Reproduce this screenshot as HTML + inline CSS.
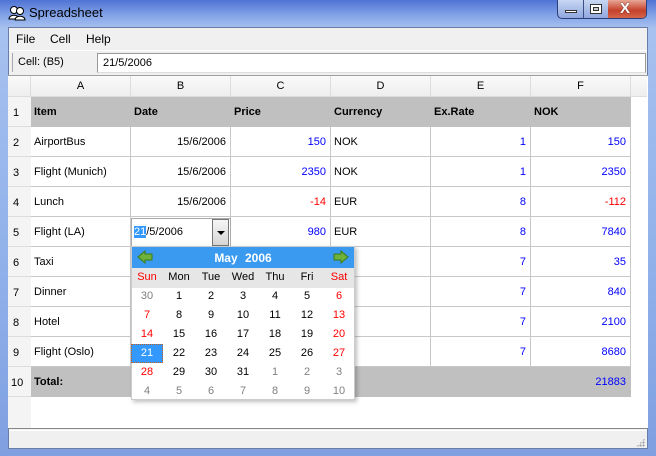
<!DOCTYPE html>
<html><head><meta charset="utf-8"><style>
*{margin:0;padding:0;box-sizing:border-box}
body{width:656px;height:456px;overflow:hidden;font-family:"Liberation Sans",sans-serif;font-size:11px;color:#000;position:relative;background:#6d8fd6}
.a{position:absolute}
.frame{left:0;top:0;width:656px;height:456px;background:linear-gradient(180deg,#4f73d4 0,#7fa0e6 14px,#a7c1ef 28px,#8fb0ea 60%,#7f9fe0 100%)}
.c{position:absolute;height:30px;line-height:30px;border-right:1px solid #c8c8c8;border-bottom:1px solid #c8c8c8;background:#fff;padding:0 3px;white-space:nowrap;overflow:hidden}
.r{text-align:right;padding-right:4px;color:#0000ff}
.red{color:#ff0000}
.h{background:#c0c0c0;font-weight:bold;border-color:#c0c0c0}
.ch{position:absolute;top:76px;height:21px;line-height:21px;text-align:center;background:linear-gradient(#fafafa,#eeeeee);border-right:1px solid #ddd;border-bottom:1px solid #ddd}
.rh{position:absolute;left:8px;width:23px;height:30px;line-height:32px;padding-left:5px;background:#f4f4f4;border-bottom:1px solid #ddd}
.cal div{position:absolute;width:32px;text-align:center}
</style></head><body>
<div class="a frame"></div>
<!-- title -->
<div class="a" style="left:8px;top:4px;width:18px;height:18px">
<svg width="18" height="18"><circle cx="6" cy="6" r="3.5" fill="#fff" stroke="#000"/><path d="M1 15c0-5 10-5 10 0z" fill="#fff" stroke="#000"/><circle cx="12" cy="7" r="3.5" fill="#fff" stroke="#000"/><path d="M7 16c0-5 10-5 10 0z" fill="#fff" stroke="#000"/></svg></div>
<div class="a" style="left:29px;top:5px;font-size:13px;color:#000">Spreadsheet</div>
<div class="a" style="left:557px;top:0;width:90px;height:19px;border:1px solid #2c3f78;border-top:none;border-radius:0 0 5px 5px;background:linear-gradient(#c8d6f2,#8ea7de);overflow:hidden">
<div class="a" style="left:25px;top:0;width:1px;height:19px;background:#3b4f86"></div>
<div class="a" style="left:50px;top:0;width:39px;height:19px;background:linear-gradient(#e8a796,#c5412a 55%,#d86a4f)"></div>
<div class="a" style="left:7px;top:10px;width:12px;height:3px;background:#fff;border:1px solid #333"></div>
<div class="a" style="left:32px;top:4px;width:12px;height:10px;border:1px solid #333;background:#fff"><div class="a" style="left:2px;top:2px;width:6px;height:4px;border:1px solid #333;background:#ccc"></div></div>
<div class="a" style="left:62px;top:0px;font-weight:bold;font-size:15px;color:#fff;text-shadow:0 0 1px #000">X</div>
</div>
<!-- client -->
<div class="a" style="left:8px;top:27px;width:640px;height:422px;background:#f0f0f0;border:1px solid #6a7ca8"></div>
<div class="a" style="left:16px;top:32px;font-size:12px">File</div>
<div class="a" style="left:50px;top:32px;font-size:12px">Cell</div>
<div class="a" style="left:86px;top:32px;font-size:12px">Help</div>
<div class="a" style="left:9px;top:50px;width:638px;height:1px;background:#fff"></div>
<div class="a" style="left:12px;top:53px;width:1px;height:19px;background:#aaa"></div>
<div class="a" style="left:18px;top:56px;font-size:11px">Cell: (B5)</div>
<div class="a" style="left:97px;top:53px;width:549px;height:20px;background:#fff;border:1px solid #999;border-bottom-color:#ddd;padding:3px 0 0 5px;font-size:11px">21/5/2006</div>
<!-- grid -->
<div class="a" style="left:8px;top:75px;width:640px;height:354px;background:#fff;border-top:1px solid #a0a0a0;border-bottom:1px solid #888"></div>
<div class="a" style="left:8px;top:76px;width:23px;height:352px;background:#f4f4f4"></div>
<div class="ch" style="left:8px;width:23px"></div>
<div class="ch" style="left:31px;width:100px">A</div>
<div class="ch" style="left:131px;width:100px">B</div>
<div class="ch" style="left:231px;width:100px">C</div>
<div class="ch" style="left:331px;width:100px">D</div>
<div class="ch" style="left:431px;width:100px">E</div>
<div class="ch" style="left:531px;width:100px">F</div>
<div class="ch" style="left:631px;width:16px;border-right:none"></div>
<div class="rh" style="top:97px">1</div><div class="rh" style="top:127px">2</div><div class="rh" style="top:157px">3</div><div class="rh" style="top:187px">4</div><div class="rh" style="top:217px">5</div><div class="rh" style="top:247px">6</div><div class="rh" style="top:277px">7</div><div class="rh" style="top:307px">8</div><div class="rh" style="top:337px">9</div><div class="rh" style="top:367px;padding-left:3px">10</div>

<div class="c h" style="left:31px;top:97px;width:100px">Item</div><div class="c h" style="left:131px;top:97px;width:100px">Date</div><div class="c h" style="left:231px;top:97px;width:100px">Price</div><div class="c h" style="left:331px;top:97px;width:100px">Currency</div><div class="c h" style="left:431px;top:97px;width:100px">Ex.Rate</div><div class="c h" style="left:531px;top:97px;width:100px">NOK</div>

<div class="c" style="left:31px;top:127px;width:100px">AirportBus</div><div class="c" style="left:131px;top:127px;width:100px;text-align:right;padding-right:4px">15/6/2006</div><div class="c r" style="left:231px;top:127px;width:100px">150</div><div class="c" style="left:331px;top:127px;width:100px">NOK</div><div class="c r" style="left:431px;top:127px;width:100px">1</div><div class="c r" style="left:531px;top:127px;width:100px">150</div>

<div class="c" style="left:31px;top:157px;width:100px">Flight (Munich)</div><div class="c" style="left:131px;top:157px;width:100px;text-align:right;padding-right:4px">15/6/2006</div><div class="c r" style="left:231px;top:157px;width:100px">2350</div><div class="c" style="left:331px;top:157px;width:100px">NOK</div><div class="c r" style="left:431px;top:157px;width:100px">1</div><div class="c r" style="left:531px;top:157px;width:100px">2350</div>

<div class="c" style="left:31px;top:187px;width:100px">Lunch</div><div class="c" style="left:131px;top:187px;width:100px;text-align:right;padding-right:4px">15/6/2006</div><div class="c r red" style="left:231px;top:187px;width:100px">-14</div><div class="c" style="left:331px;top:187px;width:100px">EUR</div><div class="c r" style="left:431px;top:187px;width:100px">8</div><div class="c r red" style="left:531px;top:187px;width:100px">-112</div>

<div class="c" style="left:31px;top:217px;width:100px">Flight (LA)</div><div class="c" style="left:131px;top:217px;width:100px"></div><div class="c r" style="left:231px;top:217px;width:100px">980</div><div class="c" style="left:331px;top:217px;width:100px">EUR</div><div class="c r" style="left:431px;top:217px;width:100px">8</div><div class="c r" style="left:531px;top:217px;width:100px">7840</div>

<div class="c" style="left:31px;top:247px;width:100px">Taxi</div><div class="c" style="left:331px;top:247px;width:100px"></div><div class="c r" style="left:431px;top:247px;width:100px">7</div><div class="c r" style="left:531px;top:247px;width:100px">35</div>
<div class="c" style="left:31px;top:277px;width:100px">Dinner</div><div class="c" style="left:331px;top:277px;width:100px"></div><div class="c r" style="left:431px;top:277px;width:100px">7</div><div class="c r" style="left:531px;top:277px;width:100px">840</div>
<div class="c" style="left:31px;top:307px;width:100px">Hotel</div><div class="c" style="left:331px;top:307px;width:100px"></div><div class="c r" style="left:431px;top:307px;width:100px">7</div><div class="c r" style="left:531px;top:307px;width:100px">2100</div>
<div class="c" style="left:31px;top:337px;width:100px">Flight (Oslo)</div><div class="c" style="left:331px;top:337px;width:100px"></div><div class="c r" style="left:431px;top:337px;width:100px">7</div><div class="c r" style="left:531px;top:337px;width:100px">8680</div>
<div class="c h" style="left:31px;top:367px;width:600px">Total:</div>
<div class="c r" style="left:531px;top:367px;width:100px;background:#c0c0c0;border-color:#c0c0c0">21883</div>

<!-- editor -->
<div class="a" style="left:131px;top:218px;width:100px;height:29px;background:#fff;border:1px solid #aaa"></div>
<div class="a" style="left:134px;top:226px;font-size:11px"><span style="background:#3399ff;color:#fff">21</span>/5/2006</div>
<div class="a" style="left:212px;top:219px;width:17px;height:27px;border:1px solid #777;background:linear-gradient(#f6f6f6,#d6d6d6)"><div class="a" style="left:4px;top:11px;width:0;height:0;border-left:4px solid transparent;border-right:4px solid transparent;border-top:4px solid #000"></div></div>

<!-- calendar -->
<div class="a" style="left:133px;top:248px;width:224px;height:154px;background:rgba(0,0,0,.25);filter:blur(2px)"></div>
<div class="a cal" style="left:131px;top:246px;width:224px;height:154px;background:#fff;border:1px solid #ccc">
<div style="left:0;top:0;width:222px;height:21px;background:#3a9af0"></div>
<div style="left:4px;top:3px;width:18px"><svg width="16" height="14"><path d="M1 7L8 1v3h7v6H8v3z" fill="#6db23a" stroke="#3d7a17"/></svg></div>
<div style="left:200px;top:3px;width:18px"><svg width="16" height="14"><path d="M15 7L8 1v3H1v6h7v3z" fill="#6db23a" stroke="#3d7a17"/></svg></div>
<div style="left:0;top:4px;width:222px;color:#fff;font-weight:bold;font-size:12px;word-spacing:4px">May 2006</div>
<div style="left:0;top:21px;width:222px;height:20px;background:#e6e6e6"></div>
<div style="left:-1px;top:97px;width:32px;height:19px;background:#3399ff;border:1px dotted #c06020"></div>
</div>
<div class="a cal" id="g" style="left:131px;top:246px;width:224px;height:154px;font-size:11px"></div>
<script>
var g=document.getElementById('g'),h='';
var n=['Sun','Mon','Tue','Wed','Thu','Fri','Sat'];
for(var i=0;i<7;i++)h+='<div style="left:'+(i*32)+'px;top:25px;color:'+(i==0||i==6?'#f00':'#000')+'">'+n[i]+'</div>';
var d=[30,1,2,3,4,5,6,7,8,9,10,11,12,13,14,15,16,17,18,19,20,21,22,23,24,25,26,27,28,29,30,31,1,2,3,4,5,6,7,8,9,10];
for(var k=0;k<42;k++){var r=Math.floor(k/7),c=k%7,col='#000';
var other=(k==0||k>=32);if(other)col='#808080';else if(c==0||c==6)col='#f00';if(k==21)col='#fff';
h+='<div style="left:'+(c*32)+'px;top:'+(44+r*19)+'px;color:'+col+'">'+d[k]+'</div>';}
g.innerHTML=h;
</script>
<!-- status -->
<div class="a" style="left:9px;top:430px;width:638px;height:1px;background:#fff"></div>
<div class="a" style="left:636px;top:438px;width:9px;height:9px;background:radial-gradient(circle,#999 0.8px,transparent 1.2px) 0 0/3px 3px;clip-path:polygon(100% 0,100% 100%,0 100%)"></div>
</body></html>
